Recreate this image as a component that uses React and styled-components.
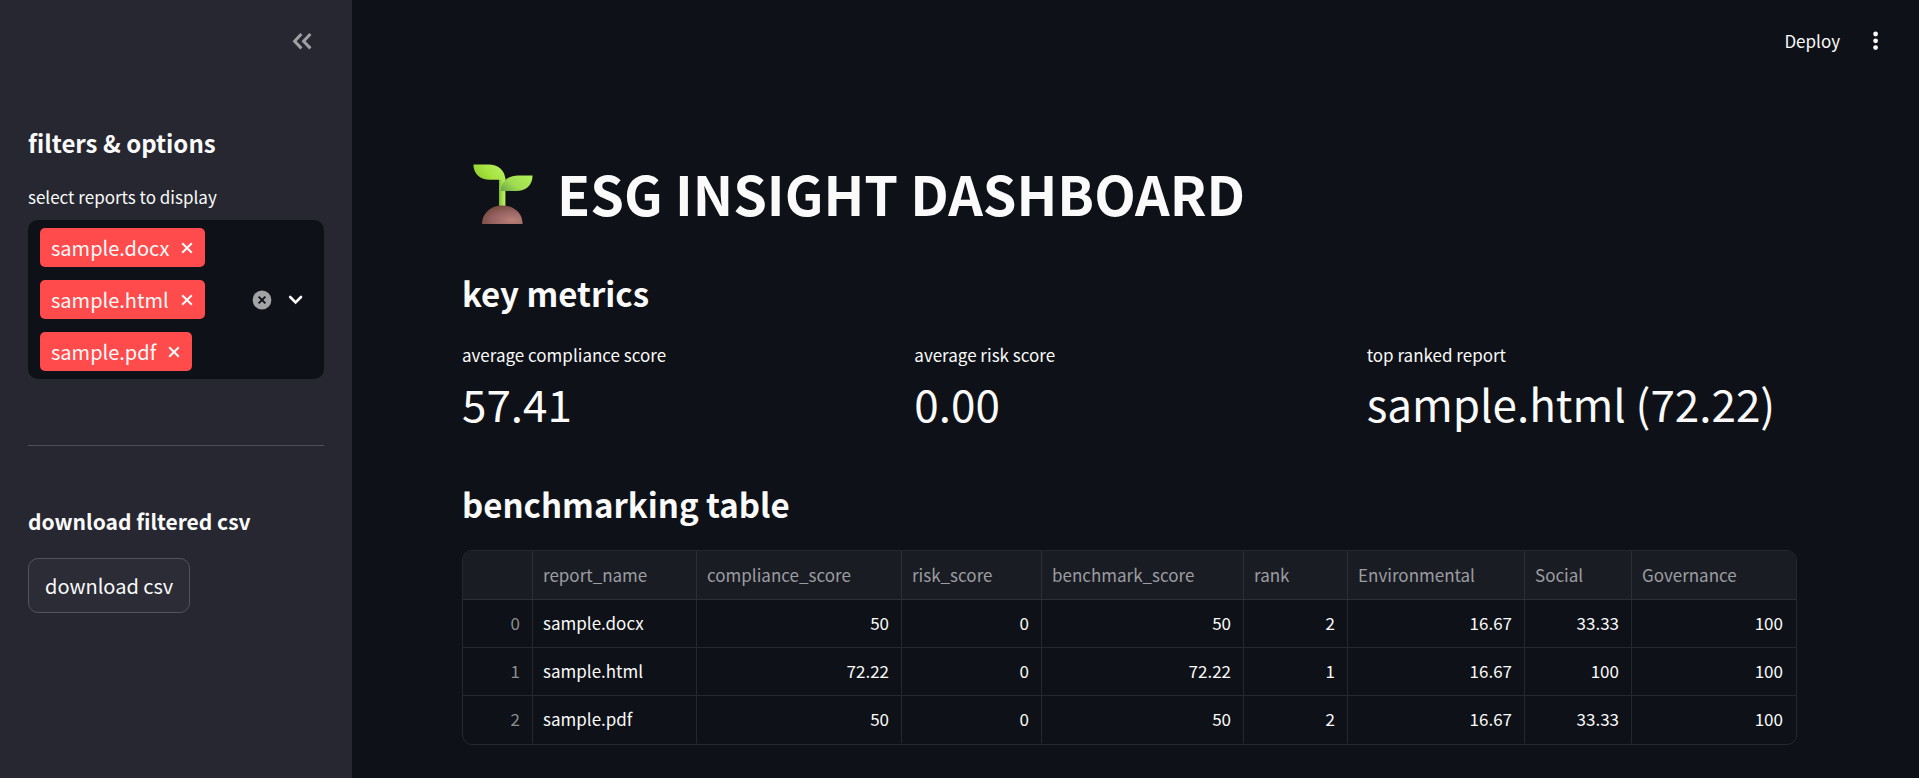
import React, { useState } from "react";
import styled, { createGlobalStyle } from "styled-components";

const GlobalStyle = createGlobalStyle`
  *, *::before, *::after { box-sizing: border-box; }
  body {
    margin: 0;
    background: #0e1117;
    color: #fafafa;
    font-family: "Noto Sans CJK SC", "Noto Sans", sans-serif;
    font-size: 17px;
  }
  button, input { font: inherit; color: inherit; }
  h1, h2, h3, p, dl, dd { margin: 0; }
`;

const Page = styled.div`
  display: flex;
  min-height: 100vh;
`;

const Sidebar = styled.aside`
  flex: 0 0 352px;
  background: #262730;
  padding: 0 28px 28px;
`;

const SidebarHeader = styled.div`
  display: flex;
  justify-content: flex-end;
  align-items: center;
  height: 82px;
  padding-right: 12px;
  margin-bottom: 44px;
`;

const IconButton = styled.button`
  display: inline-flex;
  align-items: center;
  justify-content: center;
  padding: 0;
  border: 0;
  background: none;
  color: ${(p) => p.$color || "#fafafa"};
  cursor: pointer;
`;

const SidebarTitle = styled.h2`
  font-size: 24px;
  line-height: 34px;
  font-weight: 600;
`;

const SidebarSubtitle = styled.h3`
  font-size: 21px;
  line-height: 30px;
  font-weight: 600;
`;

const FieldLabel = styled.label`
  display: block;
  margin: 25px 0 11px;
  font-size: 17px;
  line-height: 24px;
`;

const MultiSelect = styled.div`
  display: flex;
  align-items: center;
  padding: 8px 20px 8px 12px;
  background: #0e1117;
  border-radius: 10px;
`;

const TagList = styled.div`
  flex: 1;
  min-width: 0;
  display: flex;
  flex-wrap: wrap;
  gap: 13px 8px;
`;

const Tag = styled.span`
  display: inline-flex;
  align-items: center;
  gap: 12px;
  height: 39px;
  padding: 0 12px 0 11px;
  background: #ff4b4b;
  border-radius: 5px;
  font-size: 20px;
  line-height: 39px;
`;

const TagInput = styled.input`
  width: 20px;
  padding: 0;
  border: 0;
  outline: 0;
  background: transparent;
`;

const SelectActions = styled.div`
  display: flex;
  align-items: center;
  gap: 16px;
`;

const Divider = styled.hr`
  height: 1px;
  margin: 66px 0 60px;
  border: 0;
  background: #4c4d56;
`;

const DownloadButton = styled.button`
  margin-top: 22px;
  height: 55px;
  padding: 0 16px;
  background: #2b2c36;
  border: 1px solid #52535b;
  border-radius: 10px;
  font-size: 20px;
  cursor: pointer;
`;

const Main = styled.main`
  flex: 1;
  min-width: 0;
`;

const Toolbar = styled.header`
  display: flex;
  justify-content: flex-end;
  align-items: center;
  gap: 24px;
  height: 82px;
  padding-right: 32px;
`;

const DeployButton = styled.button`
  padding: 0 0 1px;
  border: 0;
  background: none;
  font-size: 17px;
  line-height: 24px;
  cursor: pointer;
`;

const Content = styled.div`
  padding: 76px 122px 32px 110px;
`;

const PageTitle = styled.h1`
  display: flex;
  align-items: center;
  gap: 24px;
  padding-left: 11px;
  font-size: 54px;
  line-height: 70px;
  font-weight: 700;
`;

const SectionTitle = styled.h2`
  margin-top: ${(p) => p.$top}px;
  font-size: 33px;
  line-height: 44px;
  font-weight: 600;
`;

const Metrics = styled.dl`
  display: grid;
  grid-template-columns: repeat(3, minmax(0, 1fr));
  gap: 22px;
  margin-top: 27px;
`;

const MetricLabel = styled.dt`
  font-size: 17px;
  line-height: 26px;
`;

const MetricValue = styled.dd`
  margin-top: 5px;
  font-size: 44px;
  line-height: 60px;
  white-space: nowrap;
`;

const TableFrame = styled.div`
  margin-top: 24px;
  border: 1px solid #25282e;
  border-radius: 10px;
  overflow: hidden;
`;

const DataTable = styled.table`
  width: 100%;
  table-layout: fixed;
  border-collapse: separate;
  border-spacing: 0;
  font-size: 17px;
  line-height: 24px;
`;

const HeadCell = styled.th`
  height: 49px;
  padding: 0 10px;
  background: #1a1c24;
  border-bottom: 1px solid #2c2f36;
  border-right: 1px solid #2c2f36;
  color: #9c9da1;
  font-weight: 400;
  text-align: left;
  &:last-child { border-right: 0; }
`;

const Cell = styled.td`
  height: 48px;
  padding: 0 12px 2px 10px;
  border-bottom: 1px solid #25282e;
  border-right: 1px solid #25282e;
  color: ${(p) => (p.$muted ? "#8c8d91" : "#fafafa")};
  font-weight: 400;
  text-align: ${(p) => (p.$text ? "left" : "right")};
  &:last-child { border-right-color: transparent; }
  tr:last-child > & { border-bottom-color: transparent; }
`;

const CollapseIcon = () => (
  <svg width="20" height="18" viewBox="0 0 20 18" fill="none" stroke="currentColor" strokeWidth="3" aria-hidden="true">
    <path d="M9.4 2L2.6 9.2l6.8 7.2M18.4 2L11.6 9.2l6.8 7.2" />
  </svg>
);

const CrossIcon = () => (
  <svg width="12" height="12" viewBox="0 0 12 12" fill="none" stroke="currentColor" strokeWidth="2" aria-hidden="true">
    <path d="M1.2 1.2l9.6 9.6M10.8 1.2L1.2 10.8" />
  </svg>
);

const ClearIcon = () => (
  <svg width="20" height="20" viewBox="0 0 20 20" aria-hidden="true">
    <circle cx="10" cy="10" r="9.4" fill="#a3a3a5" />
    <path d="M6.6 6.6l6.8 6.8M13.4 6.6l-6.8 6.8" stroke="#0e1117" strokeWidth="1.9" />
  </svg>
);

const ChevronIcon = () => (
  <svg width="16" height="12" viewBox="0 0 16 12" fill="none" stroke="currentColor" strokeWidth="2.6" strokeLinecap="round" aria-hidden="true">
    <path d="M2.2 3L7.6 8.4L13 3" />
  </svg>
);

const DotsIcon = () => (
  <svg width="23" height="20" viewBox="0 0 23 20" fill="currentColor" aria-hidden="true">
    <circle cx="11.6" cy="3" r="2.4" />
    <circle cx="11.6" cy="9.8" r="2.4" />
    <circle cx="11.6" cy="16.6" r="2.4" />
  </svg>
);

const SeedlingIcon = () => (
  <svg width="60" height="66" viewBox="0 0 60 66" role="img" aria-label="seedling">
    <defs>
      <linearGradient id="leafLeft" x1="0" y1="0.7" x2="1" y2="0.3">
        <stop offset="0" stopColor="#8ccb2c" />
        <stop offset="0.5" stopColor="#a9e443" />
        <stop offset="1" stopColor="#b4f060" />
      </linearGradient>
      <linearGradient id="leafRight" x1="0" y1="0.8" x2="1" y2="0.2">
        <stop offset="0" stopColor="#6fae46" />
        <stop offset="0.4" stopColor="#a0dc50" />
        <stop offset="1" stopColor="#b0f056" />
      </linearGradient>
      <linearGradient id="stem" x1="0" y1="0" x2="1" y2="0">
        <stop offset="0" stopColor="#7cb82c" />
        <stop offset="0.5" stopColor="#a8e050" />
        <stop offset="1" stopColor="#bcf468" />
      </linearGradient>
      <radialGradient id="soil" cx="0.75" cy="0.8" r="0.8">
        <stop offset="0" stopColor="#b98078" />
        <stop offset="0.6" stopColor="#976362" />
        <stop offset="1" stopColor="#7c4c43" />
      </radialGradient>
    </defs>
    <path d="M26 18h6.4v30H26z" fill="url(#stem)" />
    <path d="M0.4 4.6h15.2C25 4.6 32 10.4 32.4 19.8H17C7 19.8 0.6 14.4 0.4 4.6z" fill="url(#leafLeft)" />
    <path d="M59.6 15.4H45C35 15.4 28 21.4 27.6 31H43C53 31 59.4 25 59.6 15.4z" fill="url(#leafRight)" />
    <path d="M9 64C9 53 18 45.4 29.4 45.4S49.6 53 49.6 64z" fill="url(#soil)" />
  </svg>
);

const METRICS = [
  ["average compliance score", "57.41"],
  ["average risk score", "0.00"],
  ["top ranked report", "sample.html (72.22)"],
];

const COLUMNS = [
  ["", 70],
  ["report_name", 164],
  ["compliance_score", 205],
  ["risk_score", 140],
  ["benchmark_score", 202],
  ["rank", 104],
  ["Environmental", 177],
  ["Social", 107],
  ["Governance", 164],
];

const ROWS = [
  ["sample.docx", "50", "0", "50", "2", "16.67", "33.33", "100"],
  ["sample.html", "72.22", "0", "72.22", "1", "16.67", "100", "100"],
  ["sample.pdf", "50", "0", "50", "2", "16.67", "33.33", "100"],
];

export default function App() {
  const [selected, setSelected] = useState(ROWS.map((row) => row[0]));

  return (
    <Page>
      <GlobalStyle />
      <Sidebar>
        <SidebarHeader>
          <IconButton $color="#a0a0a4" aria-label="Collapse sidebar">
            <CollapseIcon />
          </IconButton>
        </SidebarHeader>
        <SidebarTitle>filters &amp; options</SidebarTitle>
        <FieldLabel htmlFor="reports">select reports to display</FieldLabel>
        <MultiSelect>
          <TagList>
            {selected.map((name) => (
              <Tag key={name}>
                {name}
                <IconButton
                  aria-label={`Remove ${name}`}
                  onClick={() => setSelected(selected.filter((n) => n !== name))}
                >
                  <CrossIcon />
                </IconButton>
              </Tag>
            ))}
            <TagInput id="reports" type="text" autoComplete="off" />
          </TagList>
          <SelectActions>
            <IconButton aria-label="Clear all" onClick={() => setSelected([])}>
              <ClearIcon />
            </IconButton>
            <IconButton aria-label="Open list">
              <ChevronIcon />
            </IconButton>
          </SelectActions>
        </MultiSelect>
        <Divider />
        <SidebarSubtitle>download filtered csv</SidebarSubtitle>
        <DownloadButton>download csv</DownloadButton>
      </Sidebar>
      <Main>
        <Toolbar>
          <DeployButton>Deploy</DeployButton>
          <IconButton aria-label="Main menu">
            <DotsIcon />
          </IconButton>
        </Toolbar>
        <Content>
          <PageTitle>
            <SeedlingIcon />
            ESG INSIGHT DASHBOARD
          </PageTitle>
          <SectionTitle $top={43}>key metrics</SectionTitle>
          <Metrics>
            {METRICS.map(([label, value]) => (
              <div key={label}>
                <MetricLabel>{label}</MetricLabel>
                <MetricValue>{value}</MetricValue>
              </div>
            ))}
          </Metrics>
          <SectionTitle $top={49}>benchmarking table</SectionTitle>
          <TableFrame>
            <DataTable>
              <colgroup>
                {COLUMNS.map(([name, width]) => (
                  <col key={name} width={width} />
                ))}
              </colgroup>
              <thead>
                <tr>
                  {COLUMNS.map(([name]) => (
                    <HeadCell key={name} scope="col">{name}</HeadCell>
                  ))}
                </tr>
              </thead>
              <tbody>
                {ROWS.map((row, index) => (
                  <tr key={row[0]}>
                    <Cell as="th" scope="row" $muted>{index}</Cell>
                    {row.map((value, i) => (
                      <Cell key={COLUMNS[i + 1][0]} $text={i === 0}>{value}</Cell>
                    ))}
                  </tr>
                ))}
              </tbody>
            </DataTable>
          </TableFrame>
        </Content>
      </Main>
    </Page>
  );
}
